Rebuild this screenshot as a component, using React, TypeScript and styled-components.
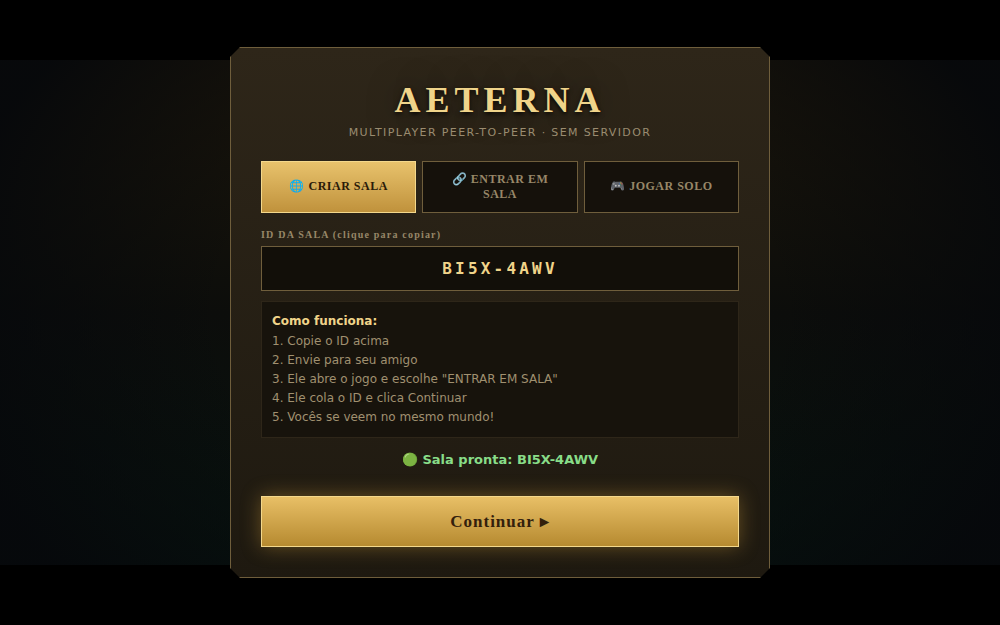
import styled, { createGlobalStyle } from "styled-components"

const tabs = [
    { id: 0, title: "🌐 CRIAR SALA", active: true },
    { id: 1, title: "🔗 ENTRAR EM SALA", active: false },
    { id: 2, title: "🎮 JOGAR SOLO", active: false },
]

const steps = [
    "1. Copie o ID acima",
    "2. Envie para seu amigo",
    '3. Ele abre o jogo e escolhe "ENTRAR EM SALA"',
    "4. Ele cola o ID e clica Continuar",
    "5. Vocês se veem no mesmo mundo!",
]

const ROOM_ID = "BI5X-4AWV"

const App = () => {
    return (
        <Page>
            <GlobalStyle />
            <Card>
                <Header>
                    <Title>AETERNA</Title>
                    <Subtitle>MULTIPLAYER PEER-TO-PEER · SEM SERVIDOR</Subtitle>
                </Header>
                <Tabs>
                    {tabs.map(({ id, title, active }) => (
                        <Tab key={id} $active={active}>{title}</Tab>
                    ))}
                </Tabs>
                <Label>ID DA SALA (clique para copiar)</Label>
                <RoomId>{ROOM_ID}</RoomId>
                <Info>
                    <InfoTitle>Como funciona:</InfoTitle>
                    {steps.map((step) => (
                        <div key={step}>{step}</div>
                    ))}
                </Info>
                <Status>🟢 Sala pronta: {ROOM_ID}</Status>
                <Continue>Continuar ▸</Continue>
            </Card>
        </Page>
    )
}
export default App

const GlobalStyle = createGlobalStyle`
    html, body {
        margin: 0;
        padding: 0;
        background: #000;
    }
    * {
        box-sizing: border-box;
    }
`

const Page = styled.div`
    width: 1000px;
    height: 625px;
    overflow: hidden;
    display: flex;
    align-items: flex-start;
    justify-content: center;
    padding-top: 47px;
    background-color: #000;
    background-image:
        radial-gradient(ellipse 560px 420px at 500px 252px, transparent 50%, rgba(6, 8, 11, 0.95) 100%),
        linear-gradient(180deg, #1c160b 0%, #0c0d0b 50%, #07130f 100%);
    background-size: 1000px 505px;
    background-position: 0 60px;
    background-repeat: no-repeat;
`

const Card = styled.div`
    width: 540px;
    height: 531px;
    padding: 31px 30px 0;
    background: linear-gradient(180deg, #2e2619 0%, #1e1910 100%);
    border: 1px solid #6f5e3c;
    clip-path: polygon(10px 0, calc(100% - 10px) 0, 100% 10px, 100% calc(100% - 10px), calc(100% - 10px) 100%, 10px 100%, 0 calc(100% - 10px), 0 10px);
`

const Header = styled.div`
    text-align: center;
    margin-bottom: 22px;
`

const Title = styled.h1`
    margin: 0;
    height: 42px;
    font-family: "Liberation Serif", serif;
    font-size: 36px;
    line-height: 42px;
    font-weight: 700;
    letter-spacing: 5px;
    color: #f0d48a;
    text-shadow: 0 2px 4px rgba(0, 0, 0, 0.8), 0 0 30px rgba(20, 14, 6, 0.5);
`

const Subtitle = styled.div`
    margin-top: 6px;
    font-family: "DejaVu Sans", sans-serif;
    font-size: 11px;
    line-height: 12px;
    letter-spacing: 1.37px;
    color: #9a8c70;
`

const Tabs = styled.div`
    display: flex;
    gap: 6px;
    margin-bottom: 16px;
`

const Tab = styled.button<{ $active: boolean }>`
    flex: 1;
    height: 52px;
    padding: 6.5px 16px 7.5px;
    font-family: "Liberation Serif", serif;
    font-size: 12px;
    line-height: 15px;
    font-weight: 700;
    letter-spacing: 0.5px;
    color: ${({ $active }) => ($active ? "#2a1a08" : "#978768")};
    background: ${({ $active }) => ($active ? "linear-gradient(180deg, #e8c26c, #c0923c)" : "#15110b")};
    border: 1px solid ${({ $active }) => ($active ? "#f4d88c" : "#6f5e3c")};
`

const Label = styled.div`
    margin-bottom: 5px;
    font-family: "Liberation Serif", serif;
    font-size: 10px;
    line-height: 12px;
    font-weight: 700;
    letter-spacing: 1.2px;
    color: #978768;
`

const RoomId = styled.div`
    height: 45px;
    margin-bottom: 10px;
    font-family: "DejaVu Sans Mono", monospace;
    font-size: 16px;
    line-height: 43px;
    font-weight: 700;
    letter-spacing: 3.2px;
    text-align: center;
    color: #f0d48a;
    background: #120f09;
    border: 1px solid #6f5e3c;
`

const Info = styled.div`
    height: 137px;
    padding: 10.4px 10px 10px;
    font-family: "DejaVu Sans", sans-serif;
    font-size: 12px;
    line-height: 19.2px;
    color: #a09070;
    background: #17130c;
    border: 1px solid #2e2619;
`

const InfoTitle = styled.div`
    font-weight: 700;
    color: #f0d48a;
`

const Status = styled.div`
    margin-top: 14px;
    height: 16px;
    font-family: "DejaVu Sans", sans-serif;
    font-size: 13px;
    line-height: 16px;
    font-weight: 700;
    text-align: center;
    color: #88dd88;
`

const Continue = styled.button`
    display: block;
    width: 100%;
    height: 51px;
    margin-top: 28px;
    font-family: "Liberation Serif", serif;
    font-size: 17px;
    font-weight: 700;
    letter-spacing: 1px;
    color: #33200c;
    background: linear-gradient(180deg, #e8bf66, #b68a30);
    border: 1px solid #f4d88c;
    box-shadow: 0 0 20px rgba(212, 160, 60, 0.4);
`
